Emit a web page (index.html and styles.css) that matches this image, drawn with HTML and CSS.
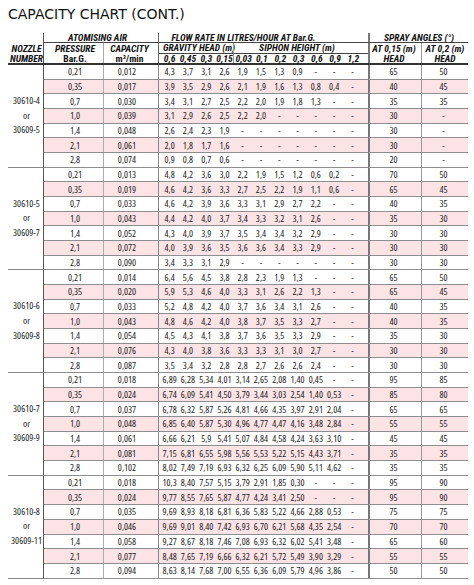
FILE: index.html
```html
<!DOCTYPE html>
<html>
<head>
<meta charset="utf-8">
<link rel="stylesheet" href="styles.css">
</head>
<body>
<div class="title">CAPACITY CHART (CONT.)</div>
<div class="chart">
  <div class="head">
    <div class="h-noz"><div class="l2">NOZZLE</div><div class="l3">NUMBER</div></div>
    <div class="h-air">ATOMISING AIR</div>
    <div class="h-pre"><div class="l2">PRESSURE</div><div class="l3 up">Bar.G.</div></div>
    <div class="h-cap"><div class="l2">CAPACITY</div><div class="l3 up">m³/min</div></div>
    <div class="h-flow">FLOW RATE IN LITRES/HOUR AT Bar.G.</div>
    <div class="h-grav">GRAVITY HEAD (m)</div>
    <div class="h-siph">SIPHON HEIGHT (m)</div>
    <div class="h-gv g"><span>0,6</span><span>0,45</span><span>0,3</span><span>0,15</span></div>
    <div class="h-sv s"><span>0,03</span><span>0,1</span><span>0,2</span><span>0,3</span><span>0,6</span><span>0,9</span><span>1,2</span></div>
    <div class="h-spray">SPRAY ANGLES (°)</div>
    <div class="h-a1"><div class="l2">AT 0,15 (m)</div><div class="l3">HEAD</div></div>
    <div class="h-a2"><div class="l2">AT 0,2 (m)</div><div class="l3">HEAD</div></div>
  </div>

  <div class="group">
    <div class="noz"><div>30610-4</div><div>or</div><div>30609-5</div></div>
    <div class="rows">
      <div class="row"><span class="p">0,21</span><span class="q">0,012</span><span class="g"><span>4,3</span><span>3,7</span><span>3,1</span><span>2,6</span></span><span class="s"><span>1,9</span><span>1,5</span><span>1,3</span><span>0,9</span><span>-</span><span>-</span><span>-</span></span><span class="a1">65</span><span class="a2">50</span></div>
      <div class="row pk"><span class="p">0,35</span><span class="q">0,017</span><span class="g"><span>3,9</span><span>3,5</span><span>2,9</span><span>2,6</span></span><span class="s"><span>2,1</span><span>1,9</span><span>1,6</span><span>1,3</span><span>0,8</span><span>0,4</span><span>-</span></span><span class="a1">40</span><span class="a2">45</span></div>
      <div class="row"><span class="p">0,7</span><span class="q">0,030</span><span class="g"><span>3,4</span><span>3,1</span><span>2,7</span><span>2,5</span></span><span class="s"><span>2,2</span><span>2,0</span><span>1,9</span><span>1,8</span><span>1,3</span><span>-</span><span>-</span></span><span class="a1">35</span><span class="a2">35</span></div>
      <div class="row pk"><span class="p">1,0</span><span class="q">0,039</span><span class="g"><span>3,1</span><span>2,9</span><span>2,6</span><span>2,5</span></span><span class="s"><span>2,2</span><span>2,0</span><span>-</span><span>-</span><span>-</span><span>-</span><span>-</span></span><span class="a1">30</span><span class="a2">-</span></div>
      <div class="row"><span class="p">1,4</span><span class="q">0,048</span><span class="g"><span>2,6</span><span>2,4</span><span>2,3</span><span>1,9</span></span><span class="s"><span>-</span><span>-</span><span>-</span><span>-</span><span>-</span><span>-</span><span>-</span></span><span class="a1">30</span><span class="a2">-</span></div>
      <div class="row pk"><span class="p">2,1</span><span class="q">0,061</span><span class="g"><span>2,0</span><span>1,8</span><span>1,7</span><span>1,6</span></span><span class="s"><span>-</span><span>-</span><span>-</span><span>-</span><span>-</span><span>-</span><span>-</span></span><span class="a1">30</span><span class="a2">-</span></div>
      <div class="row"><span class="p">2,8</span><span class="q">0,074</span><span class="g"><span>0,9</span><span>0,8</span><span>0,7</span><span>0,6</span></span><span class="s"><span>-</span><span>-</span><span>-</span><span>-</span><span>-</span><span>-</span><span>-</span></span><span class="a1">20</span><span class="a2">-</span></div>
    </div>
  </div>

  <div class="group">
    <div class="noz"><div>30610-5</div><div>or</div><div>30609-7</div></div>
    <div class="rows">
      <div class="row"><span class="p">0,21</span><span class="q">0,013</span><span class="g"><span>4,8</span><span>4,2</span><span>3,6</span><span>3,0</span></span><span class="s"><span>2,2</span><span>1,9</span><span>1,5</span><span>1,2</span><span>0,6</span><span>0,2</span><span>-</span></span><span class="a1">70</span><span class="a2">50</span></div>
      <div class="row pk"><span class="p">0,35</span><span class="q">0,019</span><span class="g"><span>4,6</span><span>4,2</span><span>3,6</span><span>3,3</span></span><span class="s"><span>2,7</span><span>2,5</span><span>2,2</span><span>1,9</span><span>1,1</span><span>0,6</span><span>-</span></span><span class="a1">65</span><span class="a2">45</span></div>
      <div class="row"><span class="p">0,7</span><span class="q">0,033</span><span class="g"><span>4,6</span><span>4,2</span><span>3,9</span><span>3,6</span></span><span class="s"><span>3,3</span><span>3,1</span><span>2,9</span><span>2,7</span><span>2,2</span><span>-</span><span>-</span></span><span class="a1">40</span><span class="a2">35</span></div>
      <div class="row pk"><span class="p">1,0</span><span class="q">0,043</span><span class="g"><span>4,4</span><span>4,2</span><span>4,0</span><span>3,7</span></span><span class="s"><span>3,4</span><span>3,3</span><span>3,2</span><span>3,1</span><span>2,6</span><span>-</span><span>-</span></span><span class="a1">35</span><span class="a2">30</span></div>
      <div class="row"><span class="p">1,4</span><span class="q">0,052</span><span class="g"><span>4,3</span><span>4,0</span><span>3,9</span><span>3,7</span></span><span class="s"><span>3,5</span><span>3,4</span><span>3,4</span><span>3,2</span><span>2,9</span><span>-</span><span>-</span></span><span class="a1">30</span><span class="a2">30</span></div>
      <div class="row pk"><span class="p">2,1</span><span class="q">0,072</span><span class="g"><span>4,0</span><span>3,9</span><span>3,6</span><span>3,5</span></span><span class="s"><span>3,6</span><span>3,6</span><span>3,4</span><span>3,3</span><span>2,9</span><span>-</span><span>-</span></span><span class="a1">30</span><span class="a2">30</span></div>
      <div class="row"><span class="p">2,8</span><span class="q">0,090</span><span class="g"><span>3,4</span><span>3,3</span><span>3,1</span><span>2,9</span></span><span class="s"><span>-</span><span>-</span><span>-</span><span>-</span><span>-</span><span>-</span><span>-</span></span><span class="a1">30</span><span class="a2">30</span></div>
    </div>
  </div>

  <div class="group">
    <div class="noz"><div>30610-6</div><div>or</div><div>30609-8</div></div>
    <div class="rows">
      <div class="row"><span class="p">0,21</span><span class="q">0,014</span><span class="g"><span>6,4</span><span>5,6</span><span>4,5</span><span>3,8</span></span><span class="s"><span>2,8</span><span>2,3</span><span>1,9</span><span>1,3</span><span>-</span><span>-</span><span>-</span></span><span class="a1">65</span><span class="a2">50</span></div>
      <div class="row pk"><span class="p">0,35</span><span class="q">0,020</span><span class="g"><span>5,9</span><span>5,3</span><span>4,6</span><span>4,0</span></span><span class="s"><span>3,3</span><span>3,1</span><span>2,6</span><span>2,2</span><span>1,3</span><span>-</span><span>-</span></span><span class="a1">65</span><span class="a2">45</span></div>
      <div class="row"><span class="p">0,7</span><span class="q">0,033</span><span class="g"><span>5,2</span><span>4,8</span><span>4,2</span><span>4,0</span></span><span class="s"><span>3,7</span><span>3,6</span><span>3,4</span><span>3,1</span><span>2,6</span><span>-</span><span>-</span></span><span class="a1">40</span><span class="a2">35</span></div>
      <div class="row pk"><span class="p">1,0</span><span class="q">0,043</span><span class="g"><span>4,8</span><span>4,6</span><span>4,2</span><span>4,0</span></span><span class="s"><span>3,8</span><span>3,7</span><span>3,5</span><span>3,3</span><span>2,7</span><span>-</span><span>-</span></span><span class="a1">40</span><span class="a2">35</span></div>
      <div class="row"><span class="p">1,4</span><span class="q">0,054</span><span class="g"><span>4,5</span><span>4,3</span><span>4,1</span><span>3,8</span></span><span class="s"><span>3,7</span><span>3,6</span><span>3,5</span><span>3,3</span><span>2,9</span><span>-</span><span>-</span></span><span class="a1">35</span><span class="a2">30</span></div>
      <div class="row pk"><span class="p">2,1</span><span class="q">0,076</span><span class="g"><span>4,3</span><span>4,0</span><span>3,8</span><span>3,6</span></span><span class="s"><span>3,3</span><span>3,3</span><span>3,1</span><span>3,0</span><span>2,7</span><span>-</span><span>-</span></span><span class="a1">30</span><span class="a2">30</span></div>
      <div class="row"><span class="p">2,8</span><span class="q">0,087</span><span class="g"><span>3,5</span><span>3,4</span><span>3,2</span><span>2,8</span></span><span class="s"><span>2,8</span><span>2,7</span><span>2,6</span><span>2,6</span><span>2,4</span><span>-</span><span>-</span></span><span class="a1">30</span><span class="a2">30</span></div>
    </div>
  </div>

  <div class="group">
    <div class="noz"><div>30610-7</div><div>or</div><div>30609-9</div></div>
    <div class="rows">
      <div class="row"><span class="p">0,21</span><span class="q">0,018</span><span class="g"><span>6,89</span><span>6,28</span><span>5,34</span><span>4,01</span></span><span class="s"><span>3,14</span><span>2,65</span><span>2,08</span><span>1,40</span><span>0,45</span><span>-</span><span>-</span></span><span class="a1">95</span><span class="a2">85</span></div>
      <div class="row pk"><span class="p">0,35</span><span class="q">0,024</span><span class="g"><span>6,74</span><span>6,09</span><span>5,41</span><span>4,50</span></span><span class="s"><span>3,79</span><span>3,44</span><span>3,03</span><span>2,54</span><span>1,40</span><span>0,53</span><span>-</span></span><span class="a1">85</span><span class="a2">80</span></div>
      <div class="row"><span class="p">0,7</span><span class="q">0,037</span><span class="g"><span>6,78</span><span>6,32</span><span>5,87</span><span>5,26</span></span><span class="s"><span>4,81</span><span>4,66</span><span>4,35</span><span>3,97</span><span>2,91</span><span>2,04</span><span>-</span></span><span class="a1">65</span><span class="a2">65</span></div>
      <div class="row pk"><span class="p">1,0</span><span class="q">0,048</span><span class="g"><span>6,85</span><span>6,40</span><span>5,87</span><span>5,30</span></span><span class="s"><span>4,96</span><span>4,77</span><span>4,47</span><span>4,16</span><span>3,48</span><span>2,84</span><span>-</span></span><span class="a1">55</span><span class="a2">55</span></div>
      <div class="row"><span class="p">1,4</span><span class="q">0,061</span><span class="g"><span>6,66</span><span>6,21</span><span>5,9</span><span>5,41</span></span><span class="s"><span>5,07</span><span>4,84</span><span>4,58</span><span>4,24</span><span>3,63</span><span>3,10</span><span>-</span></span><span class="a1">45</span><span class="a2">45</span></div>
      <div class="row pk"><span class="p">2,1</span><span class="q">0,081</span><span class="g"><span>7,15</span><span>6,81</span><span>6,55</span><span>5,98</span></span><span class="s"><span>5,56</span><span>5,53</span><span>5,22</span><span>5,15</span><span>4,43</span><span>3,71</span><span>-</span></span><span class="a1">35</span><span class="a2">35</span></div>
      <div class="row"><span class="p">2,8</span><span class="q">0,102</span><span class="g"><span>8,02</span><span>7,49</span><span>7,19</span><span>6,93</span></span><span class="s"><span>6,32</span><span>6,25</span><span>6,09</span><span>5,90</span><span>5,11</span><span>4,62</span><span>-</span></span><span class="a1">35</span><span class="a2">35</span></div>
    </div>
  </div>

  <div class="group">
    <div class="noz"><div>30610-8</div><div>or</div><div>30609-11</div></div>
    <div class="rows">
      <div class="row"><span class="p">0,21</span><span class="q">0,018</span><span class="g"><span>10,3</span><span>8,40</span><span>7,57</span><span>5,15</span></span><span class="s"><span>3,79</span><span>2,91</span><span>1,85</span><span>0,30</span><span>-</span><span>-</span><span>-</span></span><span class="a1">95</span><span class="a2">90</span></div>
      <div class="row pk"><span class="p">0,35</span><span class="q">0,024</span><span class="g"><span>9,77</span><span>8,55</span><span>7,65</span><span>5,87</span></span><span class="s"><span>4,77</span><span>4,24</span><span>3,41</span><span>2,50</span><span>-</span><span>-</span><span>-</span></span><span class="a1">95</span><span class="a2">90</span></div>
      <div class="row"><span class="p">0,7</span><span class="q">0,035</span><span class="g"><span>9,69</span><span>8,93</span><span>8,18</span><span>6,81</span></span><span class="s"><span>6,36</span><span>5,83</span><span>5,22</span><span>4,66</span><span>2,88</span><span>0,53</span><span>-</span></span><span class="a1">75</span><span class="a2">75</span></div>
      <div class="row pk"><span class="p">1,0</span><span class="q">0,046</span><span class="g"><span>9,69</span><span>9,01</span><span>8,40</span><span>7,42</span></span><span class="s"><span>6,93</span><span>6,70</span><span>6,21</span><span>5,68</span><span>4,35</span><span>2,54</span><span>-</span></span><span class="a1">70</span><span class="a2">70</span></div>
      <div class="row"><span class="p">1,4</span><span class="q">0,058</span><span class="g"><span>9,27</span><span>8,67</span><span>8,18</span><span>7,46</span></span><span class="s"><span>7,08</span><span>6,93</span><span>6,32</span><span>6,02</span><span>5,41</span><span>3,48</span><span>-</span></span><span class="a1">65</span><span class="a2">60</span></div>
      <div class="row pk"><span class="p">2,1</span><span class="q">0,077</span><span class="g"><span>8,48</span><span>7,65</span><span>7,19</span><span>6,66</span></span><span class="s"><span>6,32</span><span>6,21</span><span>5,72</span><span>5,49</span><span>3,90</span><span>3,29</span><span>-</span></span><span class="a1">55</span><span class="a2">55</span></div>
      <div class="row"><span class="p">2,8</span><span class="q">0,094</span><span class="g"><span>8,63</span><span>8,14</span><span>7,68</span><span>7,00</span></span><span class="s"><span>6,55</span><span>6,36</span><span>6,09</span><span>5,79</span><span>4,96</span><span>3,86</span><span>-</span></span><span class="a1">50</span><span class="a2">50</span></div>
    </div>
  </div>
</div>
</body>
</html>
```
FILE: styles.css
```css
* { box-sizing: border-box; }
html, body { margin: 0; padding: 0; background: #fff; }
body {
  width: 474px;
  height: 585px;
  overflow: hidden;
  font-family: "Open Sans", "Roboto", sans-serif;
  font-stretch: 75%;
  color: #1a1a1a;
}
.title {
  font-family: "DejaVu Sans", sans-serif;
  font-stretch: normal;
  font-size: 14px;
  line-height: 20px;
  height: 33px;
  padding: 4px 0 0 8px;
  color: #111;
}
.chart { margin-left: 8px; width: 460px; }

.head {
  display: grid;
  grid-template-columns: 36px 59px 55px 75px 135px 53px 47px;
  grid-template-rows: 10px 11px 9px;
  border-bottom: 2px solid #333;
  font-family: "Roboto Condensed", "Roboto", sans-serif;
  font-stretch: condensed;
  font-weight: bold;
  font-style: italic;
  font-size: 9.6px;
  line-height: 10px;
  color: #111;
}
.head > div { text-align: center; white-space: nowrap; }
.head .l2 { height: 11px; line-height: 11px; }
.head .l3 { height: 9px; line-height: 9px; }
.head .up { font-style: normal; }
.h-noz { grid-column: 1; grid-row: 1 / 4; border-right: 1px solid #555; padding-top: 10px; padding-left: 2px; }
.h-air { grid-column: 2 / 4; grid-row: 1; border-bottom: 1px solid #444; padding-right: 7px; }
.h-pre { grid-column: 2; grid-row: 2 / 4; padding-left: 3px; }
.h-cap { grid-column: 3; grid-row: 2 / 4; border-left: 1px solid #aaa; padding-right: 3px; }
.h-flow { grid-column: 4 / 6; grid-row: 1; border-bottom: 1px solid #444; border-left: 1px solid #666; padding-right: 40px; }
.h-grav { grid-column: 4; grid-row: 2; border-bottom: 1px solid #444; border-left: 1px solid #666; padding-left: 4px; }
.h-siph { grid-column: 5; grid-row: 2; border-bottom: 1px solid #444; border-left: 1px solid #999; padding-right: 8px; }
.h-gv { grid-column: 4; grid-row: 3; border-left: 1px solid #666; }
.h-sv { grid-column: 5; grid-row: 3; border-left: 1px solid #999; }
.h-spray { grid-column: 6 / 8; grid-row: 1; border-bottom: 1px solid #444; border-left: 2px solid #777; }
.h-a1 { grid-column: 6; grid-row: 2 / 4; border-left: 2px solid #777; padding-right: 3px; }
.h-a2 { grid-column: 7; grid-row: 2 / 4; border-left: 1px solid #999; }

.group { display: flex; }
.noz {
  width: 36px;
  flex: none;
  border-right: 1px solid #555;
  border-bottom: 1px solid #888;
  display: flex;
  flex-direction: column;
  justify-content: center;
  align-items: center;
  font-size: 9.5px;
  line-height: 14.68px;
  padding-left: 2px;
  white-space: nowrap;
}
.rows { flex: 1; }
.row {
  display: grid;
  grid-template-columns: 59px 55px 75px 135px 53px 47px;
  height: 14.68px;
  border-bottom: 1px solid #8e8e8e;
  font-size: 9.5px;
}
.row.pk { background: #fce3e6; }
.row > span {
  display: flex;
  align-items: center;
  justify-content: center;
  white-space: nowrap;
}
.row .p { padding-left: 3px; }
.row .q { border-left: 1px solid #adadad; padding-right: 8px; }
.row .g { border-left: 1px solid #888; }
.row .a1 { border-left: 2px solid #777; padding-right: 4px; }
.row .a2 { border-left: 1px solid #999; padding-right: 3px; }

.g, .s { display: flex; justify-content: flex-start !important; align-items: center; }
.g { padding-left: 1.5px; }
.s { padding-left: 0.5px; }
.g > span, .s > span { width: 18.3px; flex: none; text-align: center; }
```
